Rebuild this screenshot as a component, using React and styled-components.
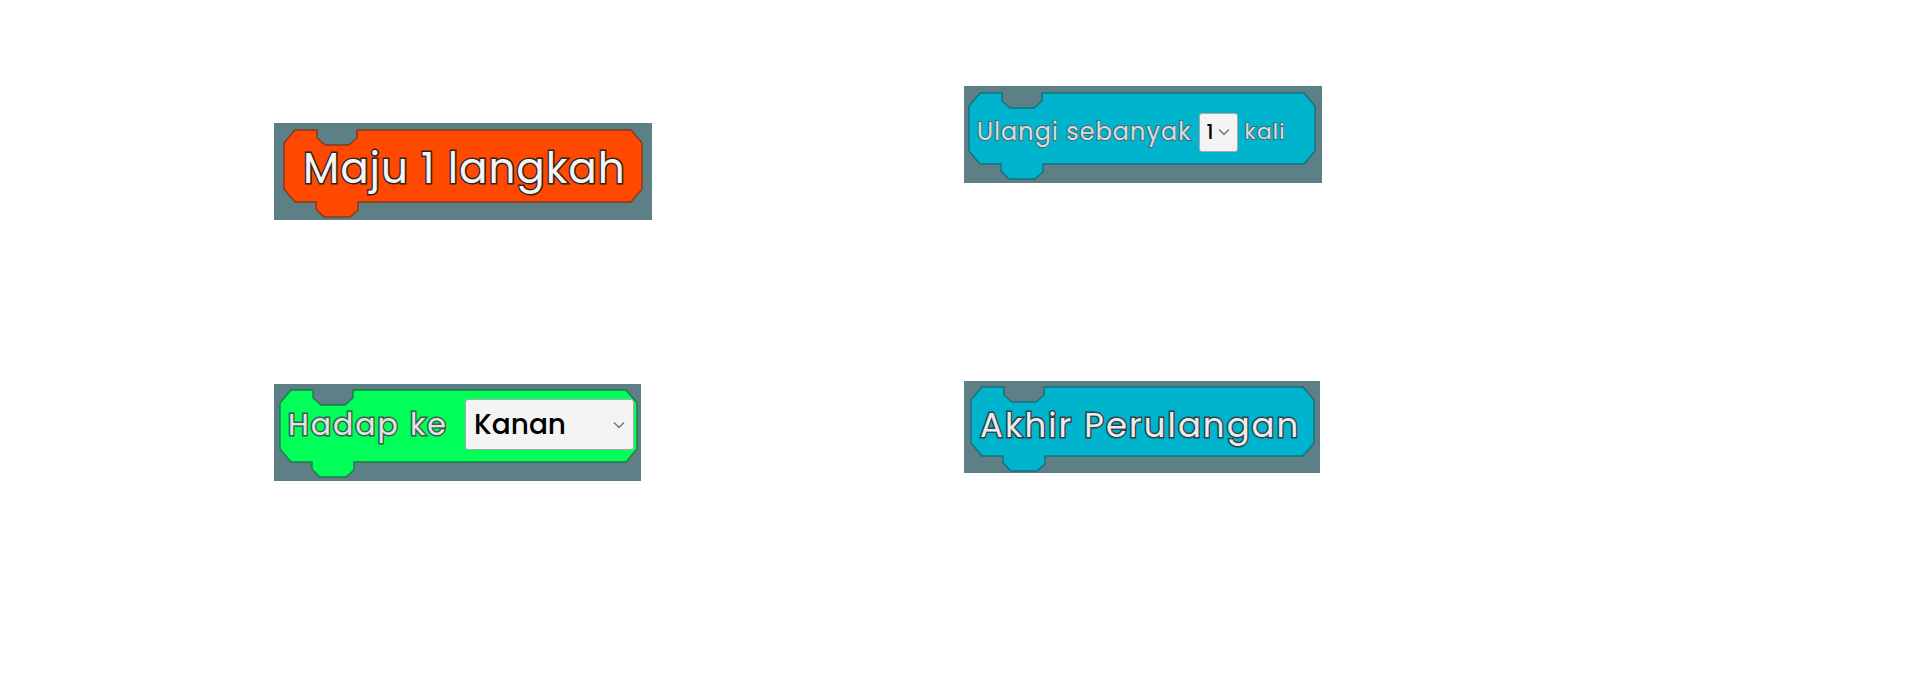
import React, { useId } from "react";
import styled, { createGlobalStyle } from "styled-components";

const GlobalStyle = createGlobalStyle`
  *, *::before, *::after { box-sizing: border-box; }
  body {
    margin: 0;
    background: #ffffff;
    font-family: Poppins, Inter, "Liberation Sans", sans-serif;
  }
`;

const Page = styled.main`
  display: grid;
  grid-template-columns: 1fr 1fr;
  gap: 8px;
  padding: 0 274px;
`;

const Column = styled.div`
  display: flex;
  flex-direction: column;
  align-items: flex-start;
  gap: ${(p) => p.$gap}px;
  padding-top: ${(p) => p.$top}px;
`;

const Tile = styled.section`
  padding: ${(p) => p.$padding};
  background: #5d8087;
`;

const Block = styled.div`
  position: relative;
  width: ${(p) => p.$width}px;
  height: ${(p) => p.$height}px;
`;

const Outline = styled.svg`
  position: absolute;
  inset: 0;
  width: 100%;
  height: 88px;
  overflow: visible;
  fill: ${(p) => p.$fill};
  stroke: ${(p) => p.$edge};
  stroke-width: 1.4;
`;

const Content = styled.div`
  position: relative;
  display: flex;
  align-items: center;
  justify-content: ${(p) => (p.$spread ? "space-between" : "flex-start")};
  height: 100%;
  padding: ${(p) => p.$padding};
  gap: ${(p) => p.$gap || 0}px;
`;

const Label = styled.label`
  color: ${(p) => p.$color};
  font-size: ${(p) => p.$size}px;
  line-height: 48px;
  font-weight: 400;
  letter-spacing: ${(p) => p.$tracking}px;
  white-space: nowrap;
  -webkit-text-stroke: ${(p) => p.$stroke || 3}px ${(p) => p.$edge};
  paint-order: stroke fill;
`;

const Picker = styled.div`
  position: relative;
  display: flex;
  align-items: center;
  flex: none;
  width: ${(p) => p.$width}px;
  height: ${(p) => p.$height}px;
`;

const Select = styled.select`
  appearance: none;
  width: 100%;
  height: 100%;
  padding: 0 0 0 ${(p) => p.$inset}px;
  border: 1px solid #a9a9a9;
  border-radius: 3px;
  background: #f4f4f4;
  color: #000000;
  font-family: inherit;
  font-size: ${(p) => p.$size}px;
  font-weight: 500;
`;

const Chevron = styled.svg`
  position: absolute;
  right: ${(p) => p.$right}px;
  width: 12px;
  height: 8px;
  fill: none;
  stroke: #777777;
  stroke-width: 1.5;
  pointer-events: none;
`;

function Shape({ width, body, fill, edge }) {
  const w = width;
  const b = body;
  const d = `M11 0H33V8L41 15H65L73 8V0H${w - 11}L${w} 13V${b - 13}L${w - 11} ${b}H74V${b + 8}L66 ${b + 15}H40L32 ${b + 7}V${b}H11L0 ${b - 13}V13Z`;
  return (
    <Outline $fill={fill} $edge={edge} aria-hidden="true">
      <path d={d} />
    </Outline>
  );
}

function Dropdown({ id, options, width, height, inset, size, right }) {
  return (
    <Picker $width={width} $height={height}>
      <Select id={id} $inset={inset} $size={size}>
        {options.map((o) => (
          <option key={o}>{o}</option>
        ))}
      </Select>
      <Chevron $right={right} viewBox="0 0 12 8" aria-hidden="true">
        <path d="M1 1.5L6 6.5L11 1.5" />
      </Chevron>
    </Picker>
  );
}

export default function App() {
  const facing = useId();
  const times = useId();
  return (
    <>
      <GlobalStyle />
      <Page>
        <Column $top={123} $gap={164}>
          <Tile $padding="7px 10px 18px">
            <Block $width={358} $height={72}>
              <Shape width={358} body={72} fill="#ff4800" edge="#87371b" />
              <Content $padding="6px 0 0 19px">
                <Label as="span" $size={42} $tracking={1} $color="#f4f4f4" $edge="#33231f">Maju 1 langkah</Label>
              </Content>
            </Block>
          </Tile>
          <Tile $padding="6px 4px 19px 6px">
            <Block $width={357} $height={72}>
              <Shape width={357} body={72} fill="#00ff58" edge="#227a48" />
              <Content $spread $padding="0 3px 3px 8px">
                <Label htmlFor={facing} $size={30} $tracking={2} $color="#e2e2e2" $edge="#38604a">Hadap ke</Label>
                <Dropdown id={facing} options={["Kanan", "Kiri", "Atas", "Bawah"]} width={169} height={51} inset={8} size={28} right={9} />
              </Content>
            </Block>
          </Tile>
        </Column>
        <Column $top={86} $gap={198}>
          <Tile $padding="7px 7px 19px 5px">
            <Block $width={346} $height={71}>
              <Shape width={346} body={71} fill="#00b4cd" edge="#14707d" />
              <Content $padding="7px 0 0 8px" $gap={7}>
                <Label htmlFor={times} $size={24} $tracking={1} $stroke={2} $color="#d6dbdc" $edge="#3f6f78">Ulangi sebanyak</Label>
                <Dropdown id={times} options={["1", "2", "3", "4", "5"]} width={39} height={39} inset={7} size={20} right={8} />
                <Label as="span" $size={22} $tracking={1} $stroke={2} $color="#d6dbdc" $edge="#3f6f78">kali</Label>
              </Content>
            </Block>
          </Tile>
          <Tile $padding="6px 6px 17px 7px">
            <Block $width={343} $height={69}>
              <Shape width={343} body={69} fill="#00b4cd" edge="#14707d" />
              <Content $padding="6px 0 0 9px">
                <Label as="span" $size={34} $tracking={2} $color="#ebebeb" $edge="#2e4347">Akhir Perulangan</Label>
              </Content>
            </Block>
          </Tile>
        </Column>
      </Page>
    </>
  );
}
